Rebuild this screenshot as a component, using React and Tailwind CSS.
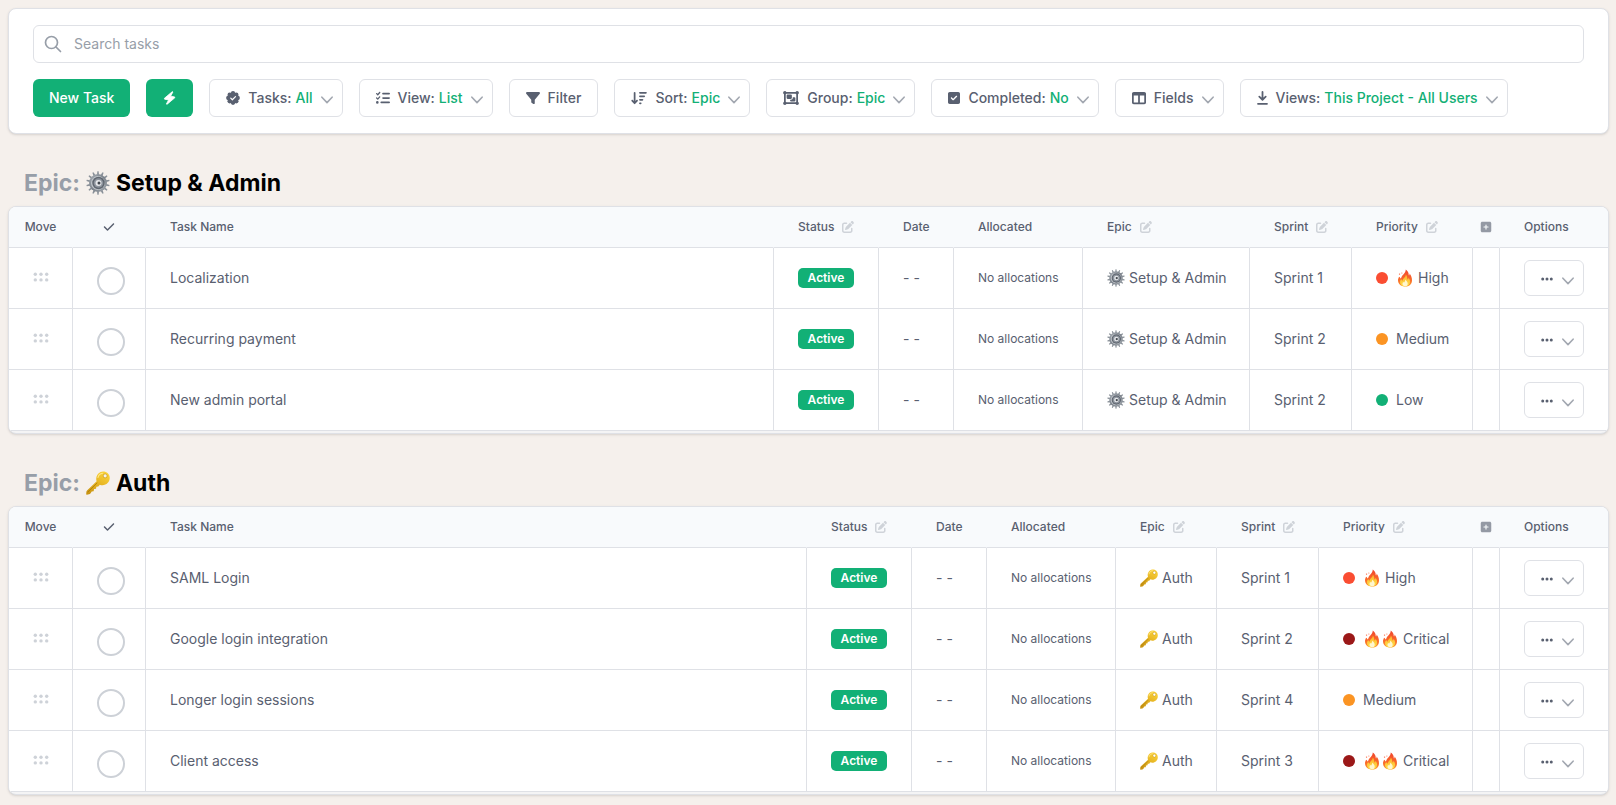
import { FaCheck, FaFilter, FaListCheck, FaArrowDownWideShort, FaObjectGroup, FaSquareCheck, FaTableColumns, FaPenToSquare, FaSquarePlus, FaEllipsis } from 'react-icons/fa6'

function Chevron() {
  return (
    <svg viewBox="0 0 12 8" className="mt-1 h-2 w-3 shrink-0 text-[#a3a8b1]" fill="none" stroke="currentColor" strokeWidth="1.6" strokeLinecap="round" strokeLinejoin="round" aria-hidden="true">
      <path d="M0.9 1.2 6 6.6l5.100-5.400" />
    </svg>
  )
}

function Bolt() {
  return (
    <svg viewBox="0 0 12 14" className="h-3.5 w-[13px]" fill="currentColor" stroke="currentColor" strokeWidth="0.8" strokeLinejoin="round" aria-hidden="true">
      <path d="M8.900 0.600 0.900 7.300l.2.900 4 .7L2.900 13l.5.400 7.900-6.600-.2-.9-4-.7L9.400 1z" />
    </svg>
  )
}

function BadgeCheck() {
  return (
    <svg viewBox="0 0 28 28" className="h-3.5 w-3.5 shrink-0" aria-hidden="true">
      <g fill="currentColor">
        <circle cx="14" cy="14" r="11.500" />
        <circle cx="14" cy="4.500" r="4.300" />
        <circle cx="20.700" cy="7.300" r="4.300" />
        <circle cx="23.500" cy="14" r="4.300" />
        <circle cx="20.700" cy="20.700" r="4.300" />
        <circle cx="14" cy="23.500" r="4.300" />
        <circle cx="7.300" cy="20.700" r="4.300" />
        <circle cx="4.500" cy="14" r="4.300" />
        <circle cx="7.300" cy="7.300" r="4.300" />
      </g>
      <path d="m9.500 14.300 3.200 3.200 6.300-6.300" fill="none" stroke="#fff" strokeWidth="2.400" strokeLinecap="round" strokeLinejoin="round" />
    </svg>
  )
}

function DownToLine() {
  return (
    <svg viewBox="0 0 11 14" className="h-3.5 w-[11px] shrink-0" fill="none" stroke="currentColor" strokeWidth="1.8" strokeLinecap="round" strokeLinejoin="round" aria-hidden="true">
      <path d="M5.500 1v7.500M2.300 5.700l3.200 3.100 3.200-3.100M1 12.800h9" />
    </svg>
  )
}

function Gear({ className }) {
  const teeth = Array.from({ length: 14 }, (_, i) => (i * 360) / 14)
  return (
    <svg viewBox="0 0 48 48" className={className} role="img" aria-label="gear">
      <defs>
        <linearGradient id="gear-rim" x1="0" y1="0" x2="1" y2="1">
          <stop offset="0" stopColor="#a9afb6" />
          <stop offset="0.5" stopColor="#7b828b" />
          <stop offset="1" stopColor="#a3a9af" />
        </linearGradient>
      </defs>
      <g fill="#8a9199">
        {teeth.map((a) => (
          <path key={a} d="M21.800 8 22.800 0.600h2.400L26.200 8z" transform={`rotate(${a} 24 24)`} />
        ))}
      </g>
      <circle cx="24" cy="24" r="18" fill="url(#gear-rim)" />
      <circle cx="24" cy="24" r="14" fill="#c0c5ca" />
      <circle cx="25" cy="24" r="12.500" fill="#5f6670" />
      <circle cx="25" cy="24" r="9.500" fill="#8d949d" />
      <circle cx="25" cy="24" r="6" fill="#e5e7ea" />
      <circle cx="26" cy="24" r="3" fill="#3f454c" />
    </svg>
  )
}

function Key({ className }) {
  return (
    <svg viewBox="0 0 48 48" className={className} role="img" aria-label="key">
      <defs>
        <linearGradient id="key-gold" x1="0.8" y1="0" x2="0.200" y2="1">
          <stop offset="0" stopColor="#fbd33c" />
          <stop offset="0.5" stopColor="#e6b422" />
          <stop offset="1" stopColor="#c99412" />
        </linearGradient>
      </defs>
      <path fillRule="evenodd" fill="url(#key-gold)" d="M34 1c7.700 0 13.500 5.300 13.500 12.700C47.500 22 41 28.500 33 28.500c-2.200 0-3.700-.4-5.300-1.100L24.500 31l-3.800.6-.6 4-4 .6-.8 4.200-3.900.6-2.200 3.500c-.8 1.300-1.800 2-3.300 2.200l-4 .8c-1 .2-1.600-.4-1.500-1.400l.4-4.600c.1-1 .5-1.900 1.300-2.700L21.300 20.500c-.7-1.900-1-3.600-.8-5.700C21.200 7 27 1 34 1zm4.300 5.200a3.600 3.600 0 1 0 0 7.200 3.600 3.600 0 0 0 0-7.200z" />
      <path d="M3.500 42.500 22.500 23.500" stroke="#a87a0c" strokeWidth="1.500" />
      <circle cx="38.300" cy="9.800" r="4" fill="none" stroke="#b98a10" strokeWidth="1" />
      <path d="M24 13c1-4.500 4.500-8 9-8.500" stroke="#ffe98a" strokeWidth="2.200" strokeLinecap="round" fill="none" />
    </svg>
  )
}

function Flame() {
  return (
    <svg viewBox="0 0 36 44" className="mx-0.5 h-[18px] w-3.5 shrink-0" role="img" aria-label="fire">
      <defs>
        <linearGradient id="flame-outer" x1="0" y1="0" x2="0" y2="1">
          <stop offset="0" stopColor="#f0442c" />
          <stop offset="0.600" stopColor="#fa6a2a" />
          <stop offset="1" stopColor="#fb9a2c" />
        </linearGradient>
        <linearGradient id="flame-inner" x1="0" y1="0" x2="0" y2="1">
          <stop offset="0" stopColor="#fdb02a" />
          <stop offset="1" stopColor="#fee04a" />
        </linearGradient>
      </defs>
      <path fill="url(#flame-outer)" d="M20 0c5 3.500 8 8.500 7.600 14 .1 1.700 1.900 1.400 2-.2.100-1.300-.1-2.400-.4-3.600 4.300 4.300 6.800 10.300 6.800 17.300C36 37.500 28.500 44 18 44S0 37.500 0 28c0-4 1.400-7 3-9.500 1.300 1 2.300 2 2.900 3.800.5 1.300 1.900 1.500 2.200-.2C9.500 14 19.500 11 20 0z" />
      <path fill="url(#flame-inner)" d="M20 13c4 4.500 3.500 8 4 11.500.3 1.600 2 1.500 2.400 0 .3-1.200.4-2 .3-3 3 3.500 4.300 6 4.300 9.500C31 39 26 43.500 18.300 43.500S5.300 38.500 5.300 32c0-3.500 1.400-5 2.700-7.500 1.200 1.200 1.700 2 2 3.500.4 1.200 1.700 1 2-.3C13.300 22 20.500 20 20 13z" />
      <path fill="#fff7d0" d="M18.500 26c3.500 3.500 6.500 6.500 6.500 10.500 0 4.300-3 6.800-6.800 6.800S11.500 40.800 11.500 37c0-2.500 1-4 2-5.500.8.800 1.200 1.600 1.700 2.500C17.500 32 18.800 29.500 18.500 26z" />
      <circle cx="4" cy="12" r="1.800" fill="#f9603a" />
      <circle cx="10" cy="9" r="1.300" fill="#f9603a" />
    </svg>
  )
}

const controls = [
  { icon: <BadgeCheck />, label: 'Tasks:', value: 'All', menu: true },
  { icon: <FaListCheck className="h-3.5 w-3.5" />, label: 'View:', value: 'List', menu: true },
  { icon: <FaFilter className="h-3.5 w-3.5" />, label: 'Filter', menu: false },
  { icon: <FaArrowDownWideShort className="h-3.5 w-4" />, label: 'Sort:', value: 'Epic', menu: true },
  { icon: <FaObjectGroup className="h-3.5 w-4" />, label: 'Group:', value: 'Epic', menu: true },
  { icon: <FaSquareCheck className="h-3.5 w-3" />, label: 'Completed:', value: 'No', menu: true },
  { icon: <FaTableColumns className="h-3.5 w-3.5" />, label: 'Fields', menu: true },
  { icon: <DownToLine />, label: 'Views:', value: 'This Project - All Users', menu: true },
]

const priorities = {
  High: { color: 'bg-[#fa4d32]', flames: 1 },
  Critical: { color: 'bg-[#9b1818]', flames: 2 },
  Medium: { color: 'bg-[#fb9423]', flames: 0 },
  Low: { color: 'bg-[#12b076]', flames: 0 },
}

const epics = [
  {
    name: 'Setup & Admin',
    Icon: Gear,
    epicWidth: 'w-[167px]',
    priorityWidth: 'w-[121px]',
    tasks: [
      ['Localization', 'Sprint 1', 'High'],
      ['Recurring payment', 'Sprint 2', 'Medium'],
      ['New admin portal', 'Sprint 2', 'Low'],
    ],
  },
  {
    name: 'Auth',
    Icon: Key,
    epicWidth: 'w-[101px]',
    priorityWidth: 'w-[154px]',
    tasks: [
      ['SAML Login', 'Sprint 1', 'High'],
      ['Google login integration', 'Sprint 2', 'Critical'],
      ['Longer login sessions', 'Sprint 4', 'Medium'],
      ['Client access', 'Sprint 3', 'Critical'],
    ],
  },
]

function Heading({ children, editable }) {
  return (
    <th scope="col" className="pl-6 text-left font-medium">
      <span className="flex items-center gap-2">
        {children}
        {editable && (
          <button type="button" aria-label={`Edit ${children}`} className="text-[#cfd3d9]">
            <FaPenToSquare className="h-3 w-3" />
          </button>
        )}
      </span>
    </th>
  )
}

function Row({ task, epic }) {
  const [name, sprint, priority] = task
  const { color, flames } = priorities[priority]
  const { Icon } = epic
  return (
    <tr className="h-[61px] [&>td+td]:border-l">
      <td>
        <button type="button" aria-label={`Move ${name}`} className="mx-auto block text-[#ced2d8]">
          <svg viewBox="0 0 16 10" className="mb-0.5 h-2.5 w-4" fill="currentColor" aria-hidden="true">
            <circle cx="2.300" cy="2.300" r="1.700" /><circle cx="8" cy="2.300" r="1.700" /><circle cx="13.700" cy="2.300" r="1.700" />
            <circle cx="2.300" cy="7.900" r="1.700" /><circle cx="8" cy="7.900" r="1.700" /><circle cx="13.700" cy="7.900" r="1.700" />
          </svg>
        </button>
      </td>
      <td className="pt-1.5 pl-6">
        <input type="checkbox" aria-label={`Complete ${name}`} className="block h-7 w-7 appearance-none rounded-full border-2 border-[#cdd1d7] bg-white" />
      </td>
      <td className="pl-6">{name}</td>
      <td className="pl-6">
        <span className="block h-5 w-14 rounded-[5px] bg-[#12b076] text-center text-xs leading-5 font-semibold text-white">Active</span>
      </td>
      <td className="pl-6">- -</td>
      <td className="pl-6 text-xs">No allocations</td>
      <td className="pl-6">
        <span className="flex items-center gap-1">
          <Icon className="h-[18px] w-[18px] shrink-0" />
          {epic.name}
        </span>
      </td>
      <td className="pl-6">{sprint}</td>
      <td className="pl-6">
        <span className="flex items-center">
          <span className={`mr-2 h-3 w-3 shrink-0 rounded-full ${color}`} />
          {Array.from({ length: flames }, (_, i) => <Flame key={i} />)}
          <span className={flames ? 'pl-1' : ''}>{priority}</span>
        </span>
      </td>
      <td></td>
      <td className="pl-6">
        <button type="button" aria-label={`Options for ${name}`} className="flex h-9 w-[60px] items-center justify-between rounded-md border border-[#dfe1e6] pt-0.5 pr-[9px] pl-4">
          <FaEllipsis className="h-3.5 w-3" />
          <Chevron />
        </button>
      </td>
    </tr>
  )
}

function EpicSection({ epic }) {
  const { Icon } = epic
  return (
    <section>
      <h2 className="flex h-[72px] items-center px-4 pt-[26px] text-[23px] leading-8 font-bold text-black">
        <span className="text-[#979ea8]">Epic:</span>
        <Icon className="mr-1.5 ml-1.5 h-6 w-6" />
        {epic.name}
      </h2>
      <div className="overflow-hidden rounded-lg border border-[#dfe1e6] bg-[#f4f4f5] pb-0.5 shadow-sm">
        <table className="w-full table-fixed border-separate border-spacing-0 bg-white whitespace-nowrap [&_td]:border-b [&_td]:border-[#dfe1e6]">
          <colgroup>
            <col className="w-[63px]" />
            <col className="w-[73px]" />
            <col />
            <col className="w-[105px]" />
            <col className="w-[75px]" />
            <col className="w-[129px]" />
            <col className={epic.epicWidth} />
            <col className="w-[102px]" />
            <col className={epic.priorityWidth} />
            <col className="w-[27px]" />
            <col className="w-[109px]" />
          </colgroup>
          <thead className="bg-[#f8fafc] text-xs">
            <tr className="h-[41px] [&>th]:border-b [&>th]:border-b-[#dfe1e6] [&>th+th]:border-l [&>th+th]:border-l-[#f8fafc]">
              <th scope="col" className="font-medium">Move</th>
              <th scope="col" aria-label="Completed"><FaCheck className="mx-auto h-3 w-3" /></th>
              <Heading>Task Name</Heading>
              <Heading editable>Status</Heading>
              <Heading>Date</Heading>
              <Heading>Allocated</Heading>
              <Heading editable>Epic</Heading>
              <Heading editable>Sprint</Heading>
              <Heading editable>Priority</Heading>
              <th scope="col">
                <button type="button" aria-label="Add field" className="mx-auto block text-[#9499a4]">
                  <FaSquarePlus className="h-3 w-3" />
                </button>
              </th>
              <Heading>Options</Heading>
            </tr>
          </thead>
          <tbody>
            {epic.tasks.map((task) => <Row key={task[0]} task={task} epic={epic} />)}
          </tbody>
        </table>
      </div>
    </section>
  )
}

export default function App() {
  return (
    <main className="min-h-screen bg-[#f5f0ec] pt-2 pr-[7px] pb-2.5 pl-2 font-['Inter',sans-serif] text-sm text-[#596070]">
      <div className="flex flex-col gap-4 rounded-lg border border-[#dfe1e6] bg-white px-6 py-4 shadow-sm">
        <label className="flex h-[38px] items-center gap-3 rounded-md border border-[#dfe1e6] pr-3 pl-2.5">
          <svg viewBox="0 0 18 18" className="h-[18px] w-[18px] shrink-0 text-[#979ea8]" fill="none" stroke="currentColor" strokeWidth="1.7" strokeLinecap="round" aria-hidden="true">
            <circle cx="7.500" cy="7.500" r="6" />
            <path d="m12 12 4.500 4.500" />
          </svg>
          <input type="search" aria-label="Search tasks" placeholder="Search tasks" className="w-full bg-transparent outline-none placeholder:text-[#979ea8]" />
        </label>
        <div className="flex flex-wrap gap-4 font-medium">
          <button type="button" className="h-[38px] rounded-md bg-[#12b076] px-4 text-white">New Task</button>
          <button type="button" aria-label="Quick task" className="h-[38px] rounded-md bg-[#12b076] px-[17px] text-white">
            <Bolt />
          </button>
          {controls.map(({ icon, label, value, menu }) => (
            <button key={label} type="button" className={`flex h-[38px] items-center rounded-md border border-[#dfe1e6] ${menu ? 'pr-[9px] pl-4' : 'px-4'}`}>
              {icon}
              <span className="pl-2">{label}</span>
              {value && <span className="pl-1 text-[#12b076]">{value}</span>}
              {menu && <span className="pl-2"><Chevron /></span>}
            </button>
          ))}
        </div>
      </div>
      {epics.map((epic) => <EpicSection key={epic.name} epic={epic} />)}
    </main>
  )
}
